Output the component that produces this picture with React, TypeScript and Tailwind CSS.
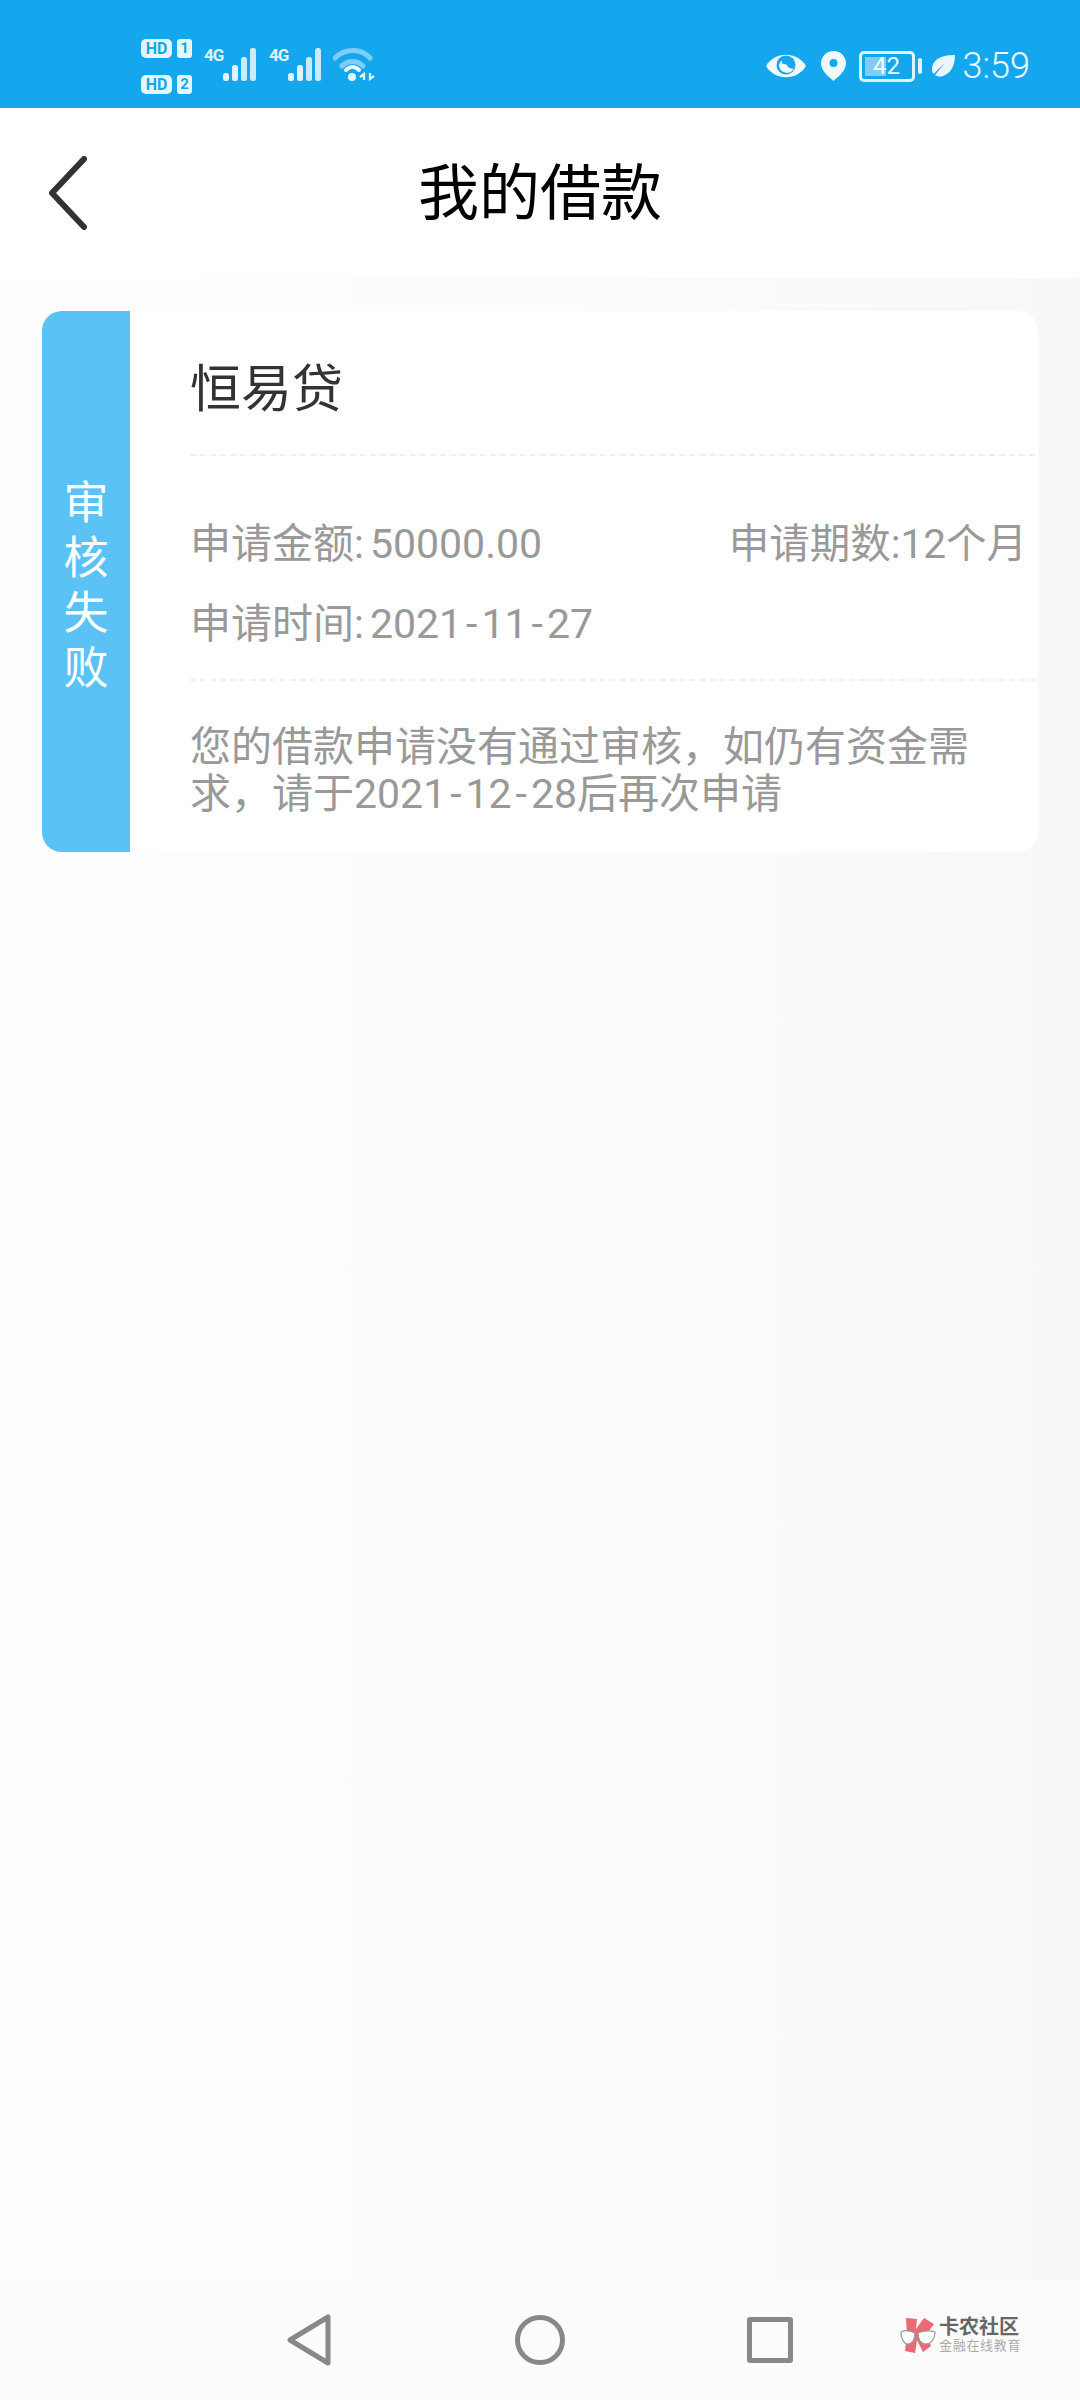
const FONT = "font-['Roboto','Noto_Sans_CJK_SC',sans-serif]";

function SignalBars() {
  return (
    <svg width="36" height="36" viewBox="0 0 36 36" className="text-[#dff3fd]" fill="currentColor">
      <rect x="0" y="26" width="6" height="8" rx="2.500" />
      <rect x="9" y="18" width="6" height="16" rx="2.500" />
      <rect x="18" y="10" width="6" height="24" rx="2.500" opacity="0.9" />
      <rect x="27" y="1" width="6" height="33" rx="2.500" opacity="0.9" />
    </svg>
  );
}

function SimBadge({ n }: { n: string }) {
  return (
    <div className="flex items-center gap-[5px] h-[19px]">
      <span className="w-[31px] h-[19px] rounded-[5px] bg-[#e6f6fe] text-[#15a7ee] text-[16px] leading-[19px] font-bold text-center font-['Roboto',sans-serif]">
        HD
      </span>
      <span className="w-[15px] h-[19px] rounded-[3px] bg-[#e6f6fe] text-[#15a7ee] text-[15px] leading-[19px] font-bold text-center font-['Roboto',sans-serif]">
        {n}
      </span>
    </div>
  );
}

// Dates in the picture have wide hyphens, so they get extra room on each side
function DateText({ value }: { value: string }) {
  const parts = value.split("-");
  return (
    <>
      {parts.map((part, i) => (
        <span key={i}>
          {i > 0 && <span className="mx-[4px]">-</span>}
          {part}
        </span>
      ))}
    </>
  );
}

function StatusBar() {
  return (
    <div className="h-[108px] bg-[#15a7ee] flex items-center justify-between pt-[24px] pl-[141px] pr-[50px] text-white">
      <div className="flex items-center">
        <div className="flex flex-col gap-[17px] mr-[12px]">
          <SimBadge n="1" />
          <SimBadge n="2" />
        </div>
        <div className="flex items-start mt-[-3px]">
          <span className="text-[17px] leading-[16px] font-bold tracking-[-1px] w-[19px] text-[#dff3fd] font-['Roboto',sans-serif]">4G</span>
          <SignalBars />
        </div>
        <div className="flex items-start mt-[-3px] ml-[10px]">
          <span className="text-[17px] leading-[16px] font-bold tracking-[-1px] w-[19px] text-[#dff3fd] font-['Roboto',sans-serif]">4G</span>
          <SignalBars />
        </div>
        <svg width="42" height="36" viewBox="0 0 42 36" fill="none" className="ml-[9px] mt-[-3px]">
          <path d="M2 11C12 1 28 1 37 11" stroke="#7fcdf5" strokeWidth="5" strokeLinecap="round" />
          <path d="M9 19C15 13 24 13 30 19" stroke="#7fcdf5" strokeWidth="5" strokeLinecap="round" />
          <path d="M13 23C17 19 22 19 26 23" stroke="#e6f6fe" strokeWidth="4" strokeLinecap="round" />
          <circle cx="19" cy="30" r="4" fill="#e6f6fe" />
          <path d="M31 33V27L27 30M37 26V32L41 29" stroke="#e6f6fe" strokeWidth="2.200" />
        </svg>
      </div>
      <div className="flex items-center">
        <svg width="42" height="28" viewBox="0 0 42 28" className="mr-[14px]">
          <path d="M1 14C10 -1 32 -1 41 14C32 29 10 29 1 14Z" fill="#f0f9fe" />
          <circle cx="21" cy="13" r="9.500" fill="#15a7ee" />
          <path d="M14 13a8 8 0 0 0 15 3.500a7 7 0 0 1-8-9a7 7 0 0 0-7 5.500Z" fill="#f0f9fe" />
          <circle cx="20" cy="9" r="3.200" fill="#15a7ee" />
        </svg>
        <svg width="25" height="30" viewBox="0 0 25 30" className="mr-[13px]">
          <path d="M12.500 0C5.500 0 0 5.500 0 12.300C0 20 8 26 12.500 30C17 26 25 20 25 12.300C25 5.500 19.500 0 12.500 0Z" fill="#f0f9fe" />
          <circle cx="12.500" cy="12" r="4" fill="#15a7ee" />
        </svg>
        <div className="relative w-[56px] h-[31px] rounded-[5px] border-[3px] border-[#dff3fd] p-[3px] mr-[3px]">
          <div className="w-[21px] h-full bg-[#7fcdf5]" />
          <span className="absolute inset-0 text-center text-[24px] leading-[25px] text-[#f0f9fe] font-['Roboto',sans-serif]">42</span>
        </div>
        <div className="w-[4px] h-[16px] rounded-[2px] bg-[#dff3fd] mr-[9px]" />
        <svg width="24" height="22" viewBox="0 0 24 22" className="mr-[8px]">
          <path d="M24 0C12 0 2 3 1 14C1 16 1.500 18 2.500 19L14 8L4 20C6 21.500 9 22 12 21C21 18 24 9 24 0Z" fill="#eaf7fe" />
        </svg>
        <span className="text-[36px] leading-[44px] font-light text-[#eef9ff] font-['Roboto',sans-serif]">3:59</span>
      </div>
    </div>
  );
}

function Header() {
  return (
    <div className="h-[170px] bg-white grid grid-cols-[1fr_auto_1fr] items-center">
      <svg width="44" height="74" viewBox="0 0 44 74" fill="none" className="ml-[46px]">
        <path d="M38 3L6 37L38 71" stroke="#333333" strokeWidth="6" strokeLinecap="round" strokeLinejoin="round" />
      </svg>
      <h1 className={`${FONT} text-[61px] leading-[70px] text-black font-normal pt-[1px]`}>我的借款</h1>
      <div />
    </div>
  );
}

function LoanCard() {
  return (
    <div className={`${FONT} mt-[33px] mx-[42px] h-[541px] flex`}>
      <div className="w-[88px] rounded-l-[20px] bg-[#5bc2f6] flex flex-col items-center justify-center text-white text-[45px] leading-[55px] pt-[8px]">
        <span>审</span>
        <span>核</span>
        <span>失</span>
        <span>败</span>
      </div>
      <div className="flex-1 bg-white rounded-r-[20px] pl-[60px] pr-[3px] flex flex-col">
        <div className="h-[145px] border-b-2 border-dashed border-[#f0f0f0] flex items-center pt-[16px] text-[51px] text-[#333333]">
          恒易贷
        </div>
        <div className="h-[225px] border-b-2 border-dashed border-[#f0f0f0] pt-[48px] pr-[8px] text-[41px] leading-[80px] text-[#999999]">
          <div className="flex justify-between">
            <span>
              申请金额:<span className="ml-[6px]">50000.00</span>
            </span>
            <span className="text-[40.500px]">申请期数:12个月</span>
          </div>
          <div>
            申请时间:<span className="ml-[6px]"><DateText value="2021-11-27" /></span>
          </div>
        </div>
        <div className="pt-[43px] text-[41px] leading-[47px] text-[#999999]">
          <div>您的借款申请没有通过审核，如仍有资金需</div>
          <div>
            求，请于<DateText value="2021-12-28" />后再次申请
          </div>
        </div>
      </div>
    </div>
  );
}

function NavBar() {
  return (
    <div className="h-[120px] bg-[#fbfbfb] flex items-center pl-[287px]">
      <svg width="44" height="52" viewBox="0 0 44 52" fill="none" className="mr-[184px]">
        <path d="M3 26L41 3V49Z" stroke="#888888" strokeWidth="5" strokeLinejoin="round" />
      </svg>
      <div className="w-[50px] h-[50px] rounded-full border-[5px] border-[#888888] mr-[182px]" />
      <div className="w-[46px] h-[46px] rounded-[3px] border-[5px] border-[#888888] mr-[107px]" />
      <div className="flex items-center mt-[-10px]">
        <svg width="36" height="36" viewBox="0 0 36 36" className="mr-[3px]">
          <path d="M6 1L17 2L16 12L24 1L34 7L26 18L31 29L23 35L17 23L15 36L5 34L7 18Z" fill="#ec6a73" />
          <path d="M1 15C5 13 11 14 15 16C15 23 12 27 8 27C4 27 1 22 1 15Z" fill="#ffffff" stroke="#999999" strokeWidth="1.200" />
          <path d="M35 15C30 13 22 14 18 16C18 23 21 27 26 27C31 27 35 22 35 15Z" fill="#ffffff" stroke="#999999" strokeWidth="1.200" />
        </svg>
        <div className="flex flex-col font-['Liberation_Sans','Noto_Sans_CJK_SC',sans-serif]">
          <span className="text-[20px] leading-[21px] font-bold text-[#666666]">卡农社区</span>
          <span className="text-[13px] leading-[15px] tracking-[0.700px] text-[#aaaaaa]">金融在线教育</span>
        </div>
      </div>
    </div>
  );
}

export default function App() {
  return (
    <div className="w-[1080px] h-[2400px] flex flex-col bg-gradient-to-r from-[#fefefe] via-[#fcfcfc] to-[#f8f8f8]">
      <StatusBar />
      <Header />
      <div className="flex-1">
        <LoanCard />
      </div>
      <NavBar />
    </div>
  );
}
